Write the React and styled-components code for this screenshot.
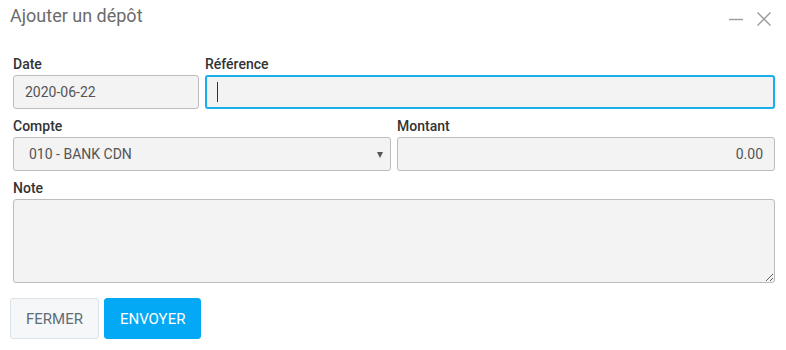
import React, {useState} from 'react';
import styled, {createGlobalStyle} from 'styled-components';

const GlobalStyle = createGlobalStyle`
  html, body {
    margin: 0;
    padding: 0;
    background: #fff;
  }
  body {
    font-family: Roboto, 'Liberation Sans', Arial, sans-serif;
  }
`;

const App = () => {
  const [reference, setReference] = useState('');
  const [note, setNote] = useState('');

  return (
    <>
      <GlobalStyle />
      <Modal>
        <Header>
          <Title>Ajouter un dépôt</Title>
          <HeaderActions>
            <IconButton aria-label="Réduire">
              <svg width="16" height="16" viewBox="0 0 16 16">
                <line x1="1" y1="8.5" x2="15" y2="8.5" stroke="#9a9a9a" strokeWidth="1.4" />
              </svg>
            </IconButton>
            <IconButton aria-label="Fermer">
              <svg width="16" height="16" viewBox="0 0 16 16">
                <path d="M1.5 1.5 L14.5 14.5 M14.5 1.5 L1.5 14.5" stroke="#9a9a9a" strokeWidth="1.4" fill="none" />
              </svg>
            </IconButton>
          </HeaderActions>
        </Header>

        <Form>
          <Row>
            <Field $span={3}>
              <Label>Date</Label>
              <Input readOnly value="2020-06-22" />
            </Field>
            <Field $span={9}>
              <Label>Référence</Label>
              <FocusWrap>
                <Input
                  $focused
                  value={reference}
                  onChange={(e) => setReference(e.target.value)}
                />
                {reference === '' && <Caret />}
              </FocusWrap>
            </Field>
          </Row>
          <Row>
            <Field $span={6}>
              <Label>Compte</Label>
              <SelectWrap>
                <Select defaultValue="010">
                  <option value="010">010 - BANK CDN</option>
                </Select>
              </SelectWrap>
            </Field>
            <Field $span={6}>
              <Label>Montant</Label>
              <Input readOnly value="0.00" $align="right" />
            </Field>
          </Row>
          <Row>
            <Field $span={12}>
              <Label>Note</Label>
              <TextArea value={note} onChange={(e) => setNote(e.target.value)} />
            </Field>
          </Row>
        </Form>

        <Footer>
          <Button>Fermer</Button>
          <Button $primary>Envoyer</Button>
        </Footer>
      </Modal>
    </>
  );
};

export default App;

const Modal = styled.div`
  width: 786px;
  height: 350px;
  box-sizing: border-box;
  padding: 0 8px 0 10px;
  background: #fff;
`;

const Header = styled.div`
  display: flex;
  align-items: flex-start;
  justify-content: space-between;
  padding-top: 5px;
  height: 56px;
  box-sizing: border-box;
`;

const Title = styled.h2`
  margin: 0;
  font-size: 18px;
  line-height: 22px;
  font-weight: 400;
  color: #6b6b6b;
`;

const HeaderActions = styled.div`
  display: flex;
  gap: 12px;
  padding-top: 6px;
  margin-right: 6px;
`;

const IconButton = styled.span`
  display: flex;
  width: 16px;
  height: 16px;
  cursor: pointer;
`;

const Form = styled.div`
  padding: 0 3px;
  display: flex;
  flex-direction: column;
  gap: 9px;
`;

const Row = styled.div`
  display: grid;
  grid-template-columns: repeat(12, 1fr);
  column-gap: 6px;
`;

const Field = styled.div`
  grid-column: span ${(p) => p.$span};
  display: flex;
  flex-direction: column;
`;

const Label = styled.label`
  font-size: 14px;
  line-height: 17px;
  font-weight: 500;
  color: #333;
  margin-bottom: 2px;
`;

const Input = styled.input`
  width: 100%;
  height: 34px;
  box-sizing: border-box;
  padding: 0 11px;
  border: ${(p) => (p.$focused ? '2px solid #1aaeed' : '1px solid #bcbcbc')};
  border-radius: 3px;
  background: #f3f3f3;
  font-family: inherit;
  font-size: 14px;
  color: #555;
  text-align: ${(p) => p.$align || 'left'};
  outline: none;
`;

const FocusWrap = styled.div`
  position: relative;
`;

const Caret = styled.span`
  position: absolute;
  left: 12px;
  top: 7px;
  width: 1px;
  height: 20px;
  background: #333;
  pointer-events: none;
`;

const SelectWrap = styled.div`
  position: relative;

  &::after {
    content: '';
    position: absolute;
    right: 8px;
    top: 15px;
    border-left: 3.5px solid transparent;
    border-right: 3.5px solid transparent;
    border-top: 6px solid #555;
    pointer-events: none;
  }
`;

const Select = styled.select`
  width: 100%;
  height: 34px;
  box-sizing: border-box;
  padding: 0 24px 0 15px;
  border: 1px solid #bcbcbc;
  border-radius: 3px;
  background: #f3f3f3;
  font-family: inherit;
  font-size: 14px;
  color: #555;
  appearance: none;
  outline: none;
`;

const TextArea = styled.textarea`
  height: 84px;
  box-sizing: border-box;
  padding: 8px 11px;
  border: 1px solid #bcbcbc;
  border-radius: 3px;
  background: #f3f3f3;
  font-family: inherit;
  font-size: 14px;
  color: #555;
  resize: both;
  outline: none;
`;

const Footer = styled.div`
  display: flex;
  gap: 5px;
  margin-top: 15px;
`;

const Button = styled.button`
  height: 41px;
  box-sizing: border-box;
  padding: 0 15px;
  border-radius: 3px;
  font-family: inherit;
  font-size: 15px;
  font-weight: 400;
  text-transform: uppercase;
  cursor: pointer;
  border: 1px solid ${(p) => (p.$primary ? '#03a9f4' : '#dde2e6')};
  background: ${(p) => (p.$primary ? '#03a9f4' : '#f5f7f9')};
  color: ${(p) => (p.$primary ? '#fff' : '#5f6d78')};
`;
